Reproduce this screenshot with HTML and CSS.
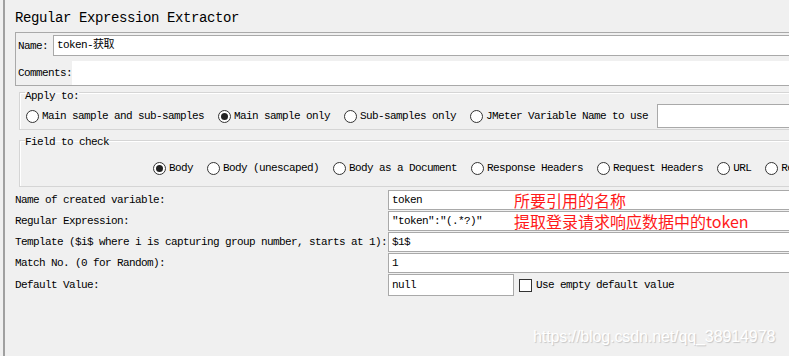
FILE: index.html
```html
<!DOCTYPE html>
<html lang="en">
<head>
    <meta charset="UTF-8">
    <meta name="viewport" content="width=device-width, initial-scale=1.0">
    <title>Regular Expression Extractor</title>
    <link rel="stylesheet" href="styles.css">
</head>
<body>

    <div class="page">
        <div class="title">Regular Expression Extractor</div>

        <div class="name-panel">
            <div class="name-row">
                <span class="name-label">Name:</span>
                <div class="text-field">token-获取</div>
            </div>
            <div class="comments-row">
                <span class="comments-label">Comments:</span>
                <div class="comments-area"></div>
            </div>
        </div>

        <fieldset class="group group-apply">
            <legend>Apply to:</legend>
            <div class="radio-row">
                <label class="option"><span class="radio"></span>Main sample and sub-samples</label>
                <label class="option"><span class="radio checked"></span>Main sample only</label>
                <label class="option"><span class="radio"></span>Sub-samples only</label>
                <label class="option"><span class="radio"></span>JMeter Variable Name to use</label>
                <div class="var-field"></div>
            </div>
        </fieldset>

        <fieldset class="group group-field">
            <legend>Field to check</legend>
            <div class="radio-row">
                <label class="option"><span class="radio checked"></span>Body</label>
                <label class="option"><span class="radio"></span>Body (unescaped)</label>
                <label class="option"><span class="radio"></span>Body as a Document</label>
                <label class="option"><span class="radio"></span>Response Headers</label>
                <label class="option"><span class="radio"></span>Request Headers</label>
                <label class="option"><span class="radio"></span>URL</label>
                <label class="option"><span class="radio"></span>Response Code</label>
            </div>
        </fieldset>

        <div class="form-grid">
            <div class="form-label">Name of created variable:</div>
            <div class="form-field">token<span class="note">所要引用的名称</span></div>

            <div class="form-label">Regular Expression:</div>
            <div class="form-field">"token":"(.*?)"<span class="note">提取登录请求响应数据中的token</span></div>

            <div class="form-label">Template ($i$ where i is capturing group number, starts at 1):</div>
            <div class="form-field">$1$</div>

            <div class="form-label">Match No. (0 for Random):</div>
            <div class="form-field">1</div>

            <div class="form-label">Default Value:</div>
            <div class="default-row">
                <div class="form-field short">null</div>
                <label class="check-option"><span class="checkbox"></span>Use empty default value</label>
            </div>
        </div>

        <div class="watermark">https://blog.csdn.net/qq_38914978</div>
    </div>

</body>
</html>
```

FILE: styles.css
```css
html, body {
    margin: 0;
    padding: 0;
}

body {
    width: 789px;
    height: 356px;
    overflow: hidden;
    background-color: #f0f0f0;
    color: #000;
    font-family: 'Liberation Mono', monospace;
    font-size: 11px;
    letter-spacing: -0.6px;
    line-height: 12px;
}

.page {
    position: relative;
    height: 356px;
    margin-left: 3px;
    padding-left: 10px;
    border-left: 2px solid #a0a0a0;
}

.title {
    height: 32px;
    box-sizing: border-box;
    padding-top: 8px;
    font-size: 14px;
    line-height: 20px;
    letter-spacing: -0.4px;
}

/* name / comments box */
.name-panel {
    width: 820px;
    height: 51px;
    padding: 1px 0 0 2px;
    border: 1px solid #a9a9a9;
}

.name-row {
    display: flex;
    align-items: center;
    height: 21px;
    margin-top: 1px;
}

.name-label {
    width: 35px;
}

.text-field {
    flex: 1;
    height: 21px;
    box-sizing: border-box;
    padding-left: 3px;
    border: 1px solid #a9a9a9;
    background: #fff;
    line-height: 19px;
    font-family: 'Liberation Mono', 'Noto Sans CJK SC', monospace;
}

.comments-row {
    display: flex;
    align-items: center;
    height: 24px;
    margin-top: 5px;
}

.comments-label {
    width: 54px;
}

.comments-area {
    flex: 1;
    align-self: stretch;
    background: #fff;
}

/* titled groups */
.group {
    width: 820px;
    margin: 0 0 0 4px;
    border: 1px solid #d5d5d5;
    box-shadow: inset 1px 1px 0 #fff;
}

.group legend {
    margin-left: -1px;
    padding: 0;
    line-height: 12px;
}

.group-apply {
    margin-top: -3px;
    padding: 0 0 1px 6px;
}

.group-apply legend {
    padding-top: 7px;
}

.group-apply .radio-row {
    height: 24px;
    margin-top: 2px;
}

.group-field {
    margin-top: 2px;
    padding: 0 0 10px 6px;
}

.group-field legend {
    padding-top: 4px;
}

.group-field .radio-row {
    height: 16px;
    margin-top: 12px;
    padding-left: 127px;
}

.radio-row {
    display: flex;
    align-items: center;
    gap: 14px;
    white-space: nowrap;
}

.option {
    display: flex;
    align-items: center;
}

.radio {
    position: relative;
    width: 13px;
    height: 13px;
    box-sizing: border-box;
    margin-right: 3px;
    border: 1px solid #333;
    border-radius: 50%;
    background: #fff;
}

.radio.checked::after {
    content: "";
    position: absolute;
    left: 2px;
    top: 2px;
    width: 7px;
    height: 7px;
    border-radius: 50%;
    background: #222;
}

.var-field {
    width: 200px;
    height: 24px;
    margin-left: -5px;
    box-sizing: border-box;
    border: 1px solid #a9a9a9;
    background: #fff;
}

/* extractor settings */
.form-grid {
    display: grid;
    grid-template-columns: 373px 500px;
    grid-template-rows: 20px 20px 20px 20px 22px;
    row-gap: 1px;
    margin-top: 3px;
}

.form-label {
    display: flex;
    align-items: center;
    white-space: nowrap;
}

.form-field {
    position: relative;
    box-sizing: border-box;
    padding-left: 3px;
    border: 1px solid #a9a9a9;
    background: #fff;
    line-height: 18px;
    white-space: nowrap;
}

.form-field.short {
    width: 126px;
    line-height: 20px;
}

.note {
    position: absolute;
    left: 125px;
    top: 0;
    color: #ff1a1a;
    font-family: 'Noto Sans CJK SC', sans-serif;
    font-size: 16px;
    line-height: 18px;
    letter-spacing: 0;
}

.default-row {
    display: flex;
    align-items: center;
}

.check-option {
    display: flex;
    align-items: center;
    margin-left: 5px;
}

.checkbox {
    width: 13px;
    height: 13px;
    box-sizing: border-box;
    margin-right: 4px;
    border: 1px solid #333;
    background: #fff;
}

.watermark {
    position: absolute;
    left: 528px;
    top: 327px;
    color: #fff;
    font-family: 'Liberation Sans', sans-serif;
    font-size: 16px;
    line-height: 20px;
    letter-spacing: -0.1px;
    text-shadow: 1px 1px 1px rgba(0, 0, 0, 0.18);
}
```
